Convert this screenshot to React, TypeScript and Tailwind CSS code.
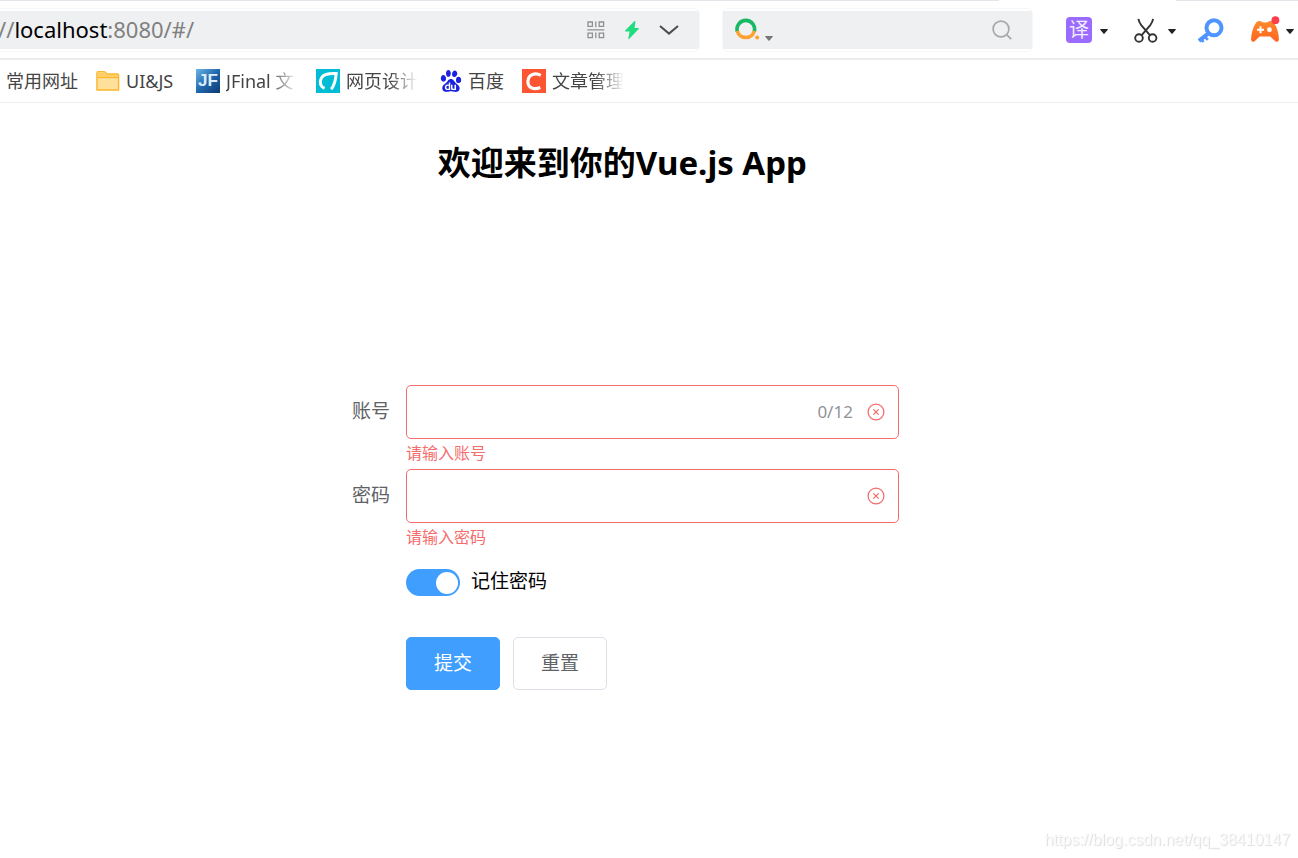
import { useState, type ReactNode } from "react";
import { SiBaidu } from "react-icons/si";

function Caret({ className }: { className: string }) {
  return (
    <svg viewBox="0 0 8 5" className={`h-[5px] w-2 shrink-0 ${className}`} aria-hidden="true">
      <path d="M0.6 0h6.8q.9 0 .3.8L4.6 4.5q-.6.7-1.2 0L.3.8Q-.3 0 .6 0z" fill="currentColor" />
    </svg>
  );
}

function QrIcon() {
  return (
    <svg viewBox="0 0 18 18" className="size-[18px]" fill="none" stroke="#8f9092" strokeWidth="1.3" aria-hidden="true">
      <path d="M1 1h4.4v4.4H1zM12.2 1h4.4v4.4h-4.4zM1 12.2h4.4v4.4H1zM12.2 12.2h4.4v4.4h-4.4zM8.8.4v5.8M8.8 11.4v5.8M.3 8.8h17" />
    </svg>
  );
}

function BoltIcon() {
  return (
    <svg viewBox="0 0 16 20" className="h-5 w-4" aria-hidden="true">
      <path d="M10.3 1.2 1.2 10.6q-.7.9.4 1h4l-1.3 7q0 1.1 1 .2L14.7 9q.7-1-.4-1.1h-3.8l.9-6q0-1.3-1.1-.7z" fill="#1fdc80" />
    </svg>
  );
}

function EngineIcon() {
  return (
    <svg viewBox="0 0 26 24" className="h-6 w-[26px]" fill="none" aria-hidden="true">
      <path d="M2.3 13.5A8.8 8.8 0 1 1 19.3 13.5" stroke="#19b865" strokeWidth="3.6" />
      <path d="M2.3 13A8.8 8.8 0 0 0 19.3 13" stroke="#ffa033" strokeWidth="3.6" />
      <circle cx="22.2" cy="19.4" r="2" fill="#ffa033" />
    </svg>
  );
}

function ScissorsIcon() {
  return (
    <svg viewBox="0 0 24 26" className="h-[26px] w-6" fill="none" stroke="#333" strokeWidth="1.9" aria-hidden="true">
      <circle cx="5" cy="21" r="3.8" />
      <circle cx="18.6" cy="21" r="3.8" />
      <path d="M4.4 1.8c.4 2.6 1.3 4.3 3 6.5l8.5 9.8M19.1 1.8c-.4 2.6-1.3 4.3-3 6.5l-8.4 9.8" />
    </svg>
  );
}

function KeyIcon() {
  return (
    <svg viewBox="0 0 26 26" className="size-[26px]" fill="none" stroke="#4f94ff" aria-hidden="true">
      <circle cx="16" cy="10.8" r="7.5" strokeWidth="4" />
      <path d="M11 15.8 1 24" strokeWidth="4.2" />
      <path d="M6.3 19.4l3.6 3.4M2.4 21.4l3.2 3.6" strokeWidth="2.6" />
    </svg>
  );
}

function GamepadIcon() {
  return (
    <svg viewBox="0 0 30 28" className="h-7 w-[30px]" aria-hidden="true">
      <defs>
        <linearGradient id="pad" x1="0" y1="0" x2="0" y2="1">
          <stop offset="0" stopColor="#ff8a2c" />
          <stop offset="1" stopColor="#fb6420" />
        </linearGradient>
      </defs>
      <path d="M6.4 6.2Q8.2 4.6 10.6 5.2Q12.2 6.4 15 6.4Q17.8 6.4 19.4 5.2Q22 4.5 23.8 6.4C27 11 28.8 17 28.9 23.2Q28.7 26.8 25.6 25.4L20.2 20.4H9.6L4.4 25.4Q1.3 26.8 1.1 23.2C1.2 17 3 11 6.4 6.2z" fill="url(#pad)" />
      <path d="M10.5 10.2v7M7 13.7h7" stroke="#fff" strokeWidth="2" />
      <circle cx="19.4" cy="13.7" r="2.4" fill="#fff" />
      <circle cx="25.4" cy="4.2" r="3.9" fill="#fd3f4b" />
    </svg>
  );
}

function FolderIcon() {
  return (
    <svg viewBox="0 0 24 24" className="size-6" strokeWidth="1.4" aria-hidden="true">
      <path d="M.9 21V4q0-1.4 1.4-1.4h5.5q1 0 1.6.8l1.2 1.6h10.6q1.4 0 1.4 1.4V21z" fill="#ffe09a" stroke="#fdb52d" strokeLinejoin="round" />
      <path d="M1.4 8.4h20.8" stroke="#fdb52d" fill="none" />
      <path d="M1.6 3.6h6l1.9 2.4h12.2v1.7H1.6z" fill="#ffcf66" />
    </svg>
  );
}

function JFinalIcon() {
  return (
    <span className="flex size-6 items-center justify-center bg-linear-to-br from-[#6cb4e6] via-[#1f68ad] to-[#0d3a72] font-['Liberation_Sans',sans-serif] text-[17px] leading-6 font-bold text-[#dcecff]" aria-hidden="true">
      JF
    </span>
  );
}

function DesignIcon() {
  return (
    <svg viewBox="0 0 24 24" className="size-6" aria-hidden="true">
      <path d="M0 0h24v24H0z" fill="#00bcd4" />
      <path d="M8.6 19.4C4 17.5 3.3 13 5.4 9 7.3 5.6 10.6 4.4 20.2 4.6 19.6 12 18.6 16 15.2 20.2" fill="none" stroke="#fff" strokeWidth="3" />
    </svg>
  );
}

function CsdnIcon() {
  return (
    <svg viewBox="0 0 24 24" className="size-6" aria-hidden="true">
      <path d="M0 0h24v24H0z" fill="#fc5531" />
      <path d="M18.8 6.3C13.4 3.4 6.4 5.2 5.9 12.3c-.2 7.2 6.4 8.6 12.4 6.2" fill="none" stroke="#fff" strokeWidth="3.1" />
    </svg>
  );
}

function Bookmark({ icon, label, clipped }: { icon?: ReactNode; label: string; clipped?: boolean }) {
  return (
    <a href="#/" className="flex shrink-0 items-center gap-1.5">
      {icon}
      <span
        className={
          clipped
            ? "w-[72px] whitespace-nowrap [mask-image:linear-gradient(to_right,black_60%,transparent)]"
            : "whitespace-nowrap"
        }
      >
        {label}
      </span>
    </a>
  );
}

function BrowserBar() {
  return (
    <header>
      <div className="flex h-px justify-between">
        <span className="w-[77%] bg-[#e2e5ea]" />
        <span className="w-[9.4%] bg-[#e2e5ea]" />
      </div>
      <div className="flex h-[59px] items-center border-b-2 border-[#ededed] pr-1">
        <div className="flex min-w-0 flex-1 items-center rounded-r-md border border-l-0 border-[#f6f7f8] py-0.5">
          <div className="flex h-[38px] min-w-0 flex-1 items-center bg-[#eff0f2] pr-5">
            <div className="min-w-0 flex-1 pb-0.5 text-[22px] leading-8 whitespace-nowrap text-[#808080]">
              <span className="-ml-0.5">//</span>
              <span className="text-black">localhost</span>:8080/#/
            </div>
            <div className="flex items-center gap-[19px]">
              <button type="button" aria-label="二维码"><QrIcon /></button>
              <button type="button" aria-label="极速模式"><BoltIcon /></button>
              <button type="button" aria-label="展开">
                <svg viewBox="0 0 20 12" className="h-3 w-5" fill="none" stroke="#4c4d50" strokeWidth="2" aria-hidden="true">
                  <path d="m1 2 9 7.6L19 2" />
                </svg>
              </button>
            </div>
          </div>
        </div>
        <div className="ml-[22px] flex w-[311px] shrink-0 rounded-md border border-[#f6f7f8] py-0.5">
          <div className="flex h-[38px] min-w-0 flex-1 items-center bg-[#eff0f2] pr-5 pl-3">
            <button type="button" aria-label="搜索引擎" className="flex shrink-0 items-end gap-1 text-[#77787a]">
              <EngineIcon />
              <Caret className="mb-px" />
            </button>
            <input aria-label="搜索" className="min-w-0 flex-1 bg-transparent text-lg outline-none" />
            <button type="button" aria-label="开始搜索" className="shrink-0">
              <svg viewBox="0 0 20 20" className="size-5" fill="none" stroke="#a6a8aa" strokeWidth="1.7" aria-hidden="true">
                <circle cx="9" cy="9" r="7.9" />
                <path d="m14.6 14.6 4.6 4.6" />
              </svg>
            </button>
          </div>
        </div>
        <nav aria-label="扩展" className="ml-[33px] flex shrink-0 items-center text-[#222]">
          <button type="button" className="flex items-center gap-2">
            <span className="flex size-[26px] items-center justify-center rounded-sm bg-[#9a6bff] text-[20px] leading-[26px] text-[#f3edff]">译</span>
            <Caret className="mt-1" />
          </button>
          <button type="button" aria-label="截图" className="ml-[26px] flex items-center gap-2.5">
            <ScissorsIcon />
            <Caret className="mt-1" />
          </button>
          <button type="button" aria-label="密码" className="ml-[22px]"><KeyIcon /></button>
          <button type="button" aria-label="游戏" className="ml-[26px] flex items-center gap-1.5">
            <GamepadIcon />
            <Caret className="mt-1" />
          </button>
        </nav>
      </div>
      <nav aria-label="书签" className="flex h-[43px] items-center gap-[18px] overflow-hidden border-b border-[#ededed] pl-1.5 text-[18px] leading-6 text-[#444]">
        <Bookmark label="常用网址" />
        <div className="w-[82px] shrink-0">
          <Bookmark icon={<FolderIcon />} label="UI&JS" />
        </div>
        <Bookmark icon={<JFinalIcon />} label="JFinal 文" clipped />
        <Bookmark icon={<DesignIcon />} label="网页设计" clipped />
        <Bookmark icon={<span className="flex h-6 w-[26px] items-center justify-end"><SiBaidu className="size-[22px] text-[#1a22e0]" /></span>} label="百度" />
        <Bookmark icon={<CsdnIcon />} label="文章管理" clipped />
      </nav>
    </header>
  );
}

function ErrorIcon() {
  return (
    <svg viewBox="0 0 18 18" className="size-[18px] shrink-0" fill="none" stroke="#f56c6c" strokeWidth="1.3" aria-hidden="true">
      <circle cx="9" cy="9" r="7.9" />
      <path d="m6.4 6.4 5.2 5.2M11.6 6.4l-5.2 5.2" />
    </svg>
  );
}

type FieldProps = {
  id: string;
  label: string;
  type: string;
  message: string;
  value: string;
  limit?: number;
  onChange: (value: string) => void;
};

function Field({ id, label, type, message, value, limit, onChange }: FieldProps) {
  return (
    <div className="grid h-[84px] grid-cols-[60px_1fr]">
      <label htmlFor={id} className="pr-4 text-right text-[19px] leading-[52px] text-[#606266]">{label}</label>
      <div>
        <div className="flex h-[54px] items-center rounded-[5px] border border-[#f56c6c] pr-[13px] pl-5">
          <input
            id={id}
            type={type}
            value={value}
            maxLength={limit}
            onChange={(event) => onChange(event.target.value)}
            aria-invalid="true"
            aria-describedby={`${id}-error`}
            className="min-w-0 flex-1 bg-transparent text-[19px] text-[#606266] outline-none"
          />
          {limit && <span className="mr-3.5 text-[17px] text-[#909399]">{value.length}/{limit}</span>}
          <ErrorIcon />
        </div>
        <p id={`${id}-error`} className="pt-1 text-[16px] leading-5 text-[#f56c6c]">{message}</p>
      </div>
    </div>
  );
}

export default function App() {
  const [account, setAccount] = useState("");
  const [password, setPassword] = useState("");
  const [remember, setRemember] = useState(true);

  const reset = () => {
    setAccount("");
    setPassword("");
    setRemember(true);
  };

  return (
    <div className="min-h-screen overflow-x-hidden bg-white font-['Noto_Sans','Noto_Sans_CJK_SC',sans-serif] text-black">
      <BrowserBar />
      <main className="w-[95.9%] pt-[38px]">
        <h1 className="text-center text-[33px] leading-[44px] font-bold">欢迎来到你的Vue.js App</h1>
        <form onSubmit={(event) => event.preventDefault()} className="mx-auto mt-[200px] w-full max-w-[553px]">
          <Field id="account" label="账号" type="text" message="请输入账号" limit={12} value={account} onChange={setAccount} />
          <Field id="password" label="密码" type="password" message="请输入密码" value={password} onChange={setPassword} />
          <div className="flex h-[84px] items-start pt-4 pl-[60px]">
            <label className="flex items-start gap-[11px] text-[19px] leading-6">
              <input
                type="checkbox"
                role="switch"
                checked={remember}
                onChange={(event) => setRemember(event.target.checked)}
                className="flex h-[27px] w-[54px] appearance-none items-center rounded-full bg-[#dcdfe6] px-0.5 before:size-[22px] before:rounded-full before:bg-white checked:justify-end checked:bg-[#409eff]"
              />
              记住密码
            </label>
          </div>
          <div className="flex gap-[13px] pl-[60px] text-[19px] leading-[51px]">
            <button type="submit" className="rounded-[5px] border border-[#409eff] bg-[#409eff] px-[27px] text-white">提交</button>
            <button type="button" onClick={reset} className="rounded-[5px] border border-[#dcdfe6] bg-white px-[27px] text-[#606266]">重置</button>
          </div>
        </form>
      </main>
      <a href="https://blog.csdn.net/qq_38410147" className="fixed right-2 bottom-2 font-['Liberation_Sans',sans-serif] text-[16px] leading-5 text-[#fafafa] [text-shadow:1px_1px_1px_#dcdcdc]">
        https://blog.csdn.net/qq_38410147
      </a>
    </div>
  );
}
